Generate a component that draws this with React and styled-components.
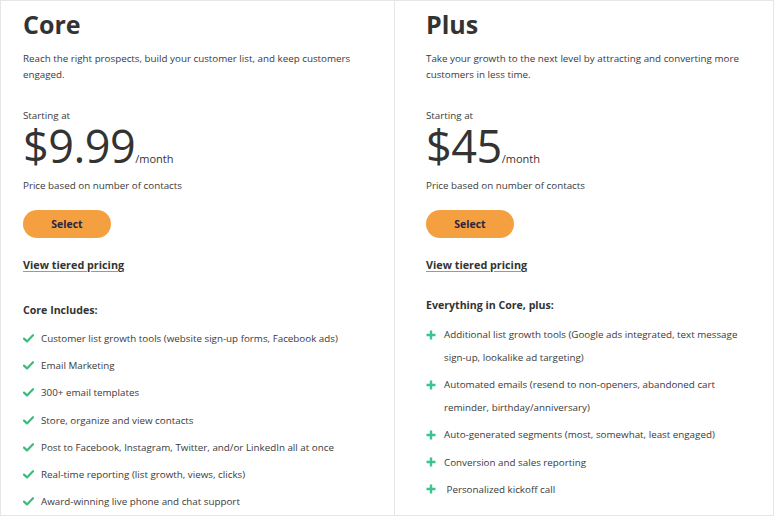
import styled, { createGlobalStyle } from "styled-components";

const GlobalStyle = createGlobalStyle`
  html, body {
    margin: 0;
    padding: 0;
    background: #ffffff;
  }
  body {
    font-family: "Open Sans", "Liberation Sans", sans-serif;
    color: #333333;
  }
`;

const Wrapper = styled.div`
  width: 774px;
  height: 516px;
  box-sizing: border-box;
  border: 1px solid #e6e6e6;
  display: grid;
  grid-template-columns: 394px 1fr;
  overflow: hidden;
`;

const Card = styled.div`
  padding: 6px 20px 0 ${(p) => p.$padLeft}px;
  border-right: ${(p) => (p.$divider ? "1px solid #e6e6e6" : "none")};
  display: flex;
  flex-direction: column;
`;

const Title = styled.h2`
  margin: 0;
  font-size: 25px;
  font-weight: 700;
  line-height: 34px;
  color: #333;
`;

const Blurb = styled.p`
  margin: 10px 0 0;
  font-size: 9.8px;
  line-height: 16px;
  color: #3a3a3a;
  max-width: 345px;
`;

const Starting = styled.div`
  margin-top: 26px;
  font-size: 9.8px;
  line-height: 14px;
  color: #3a3a3a;
`;

const PriceRow = styled.div`
  display: flex;
  align-items: baseline;
  margin-top: 1px;
`;

const Amount = styled.span`
  font-size: 45px;
  line-height: 44px;
  font-weight: 400;
  color: #333;
  letter-spacing: -0.5px;
`;

const Per = styled.span`
  font-size: 11px;
  color: #333;
`;

const Note = styled.div`
  margin-top: 11px;
  font-size: 9.8px;
  line-height: 14px;
  color: #3a3a3a;
`;

const SelectButton = styled.button`
  margin-top: 17px;
  width: 88px;
  height: 28px;
  border: none;
  border-radius: 14px;
  background: #f5a040;
  color: #2b2540;
  font-family: inherit;
  font-size: 10.5px;
  font-weight: 700;
  cursor: pointer;
  padding: 0;
`;

const TierLink = styled.a`
  margin-top: 20px;
  align-self: flex-start;
  font-size: 10.8px;
  font-weight: 700;
  line-height: 14px;
  color: #333;
  text-decoration: underline;
  text-underline-offset: 2px;
  text-decoration-color: #999;
`;

const ListHead = styled.div`
  margin-top: ${(p) => p.$top}px;
  font-size: 10.6px;
  font-weight: 700;
  line-height: 14px;
  color: #333;
`;

const List = styled.ul`
  list-style: none;
  margin: ${(p) => p.$top}px 0 0;
  padding: 0;
  display: flex;
  flex-direction: column;
  gap: 4.2px;
`;

const Item = styled.li`
  display: flex;
  align-items: flex-start;
  font-size: 9.8px;
  line-height: 23px;
  color: #3a3a3a;
`;

const Mark = styled.span`
  flex: 0 0 18px;
  height: 23px;
  display: flex;
  align-items: center;
`;

const Check = () => (
  <svg width="11" height="9" viewBox="0 0 11 9">
    <path d="M1 4.6 L4 7.4 L10 1.2" fill="none" stroke="#3dbb7f" strokeWidth="2.2" strokeLinecap="round" strokeLinejoin="round" />
  </svg>
);

const Plus = () => (
  <svg width="10" height="10" viewBox="0 0 10 10">
    <path d="M5 0.5 V9.5 M0.5 5 H9.5" stroke="#3cc48f" strokeWidth="2.4" />
  </svg>
);

const core = [
  "Customer list growth tools (website sign-up forms, Facebook ads)",
  "Email Marketing",
  "300+ email templates",
  "Store, organize and view contacts",
  "Post to Facebook, Instagram, Twitter, and/or LinkedIn all at once",
  "Real-time reporting (list growth, views, clicks)",
  "Award-winning live phone and chat support",
];

const plus = [
  "Additional list growth tools (Google ads integrated, text message sign-up, lookalike ad targeting)",
  "Automated emails (resend to non-openers, abandoned cart reminder, birthday/anniversary)",
  "Auto-generated segments (most, somewhat, least engaged)",
  "Conversion and sales reporting",
  "\u00a0Personalized kickoff call",
];

const Plan = ({ name, blurb, price, head, headTop, listTop, items, icon, padLeft, divider }) => (
  <Card $padLeft={padLeft} $divider={divider}>
    <Title>{name}</Title>
    <Blurb>{blurb}</Blurb>
    <Starting>Starting at</Starting>
    <PriceRow>
      <Amount>{price}</Amount>
      <Per>/month</Per>
    </PriceRow>
    <Note>Price based on number of contacts</Note>
    <SelectButton>Select</SelectButton>
    <TierLink href="#">View tiered pricing</TierLink>
    <ListHead $top={headTop}>{head}</ListHead>
    <List $top={listTop}>
      {items.map((t) => (
        <Item key={t}>
          <Mark>{icon}</Mark>
          <span>{t}</span>
        </Item>
      ))}
    </List>
  </Card>
);

export default function App() {
  return (
    <>
      <GlobalStyle />
      <Wrapper>
        <Plan
          name="Core"
          blurb="Reach the right prospects, build your customer list, and keep customers engaged."
          price="$9.99"
          head="Core Includes:"
          headTop={31}
          listTop={10}
          items={core}
          icon={<Check />}
          padLeft={22}
          divider
        />
        <Plan
          name="Plus"
          blurb="Take your growth to the next level by attracting and converting more customers in less time."
          price="$45"
          head="Everything in Core, plus:"
          headTop={26}
          listTop={11}
          items={plus}
          icon={<Plus />}
          padLeft={31}
        />
      </Wrapper>
    </>
  );
}
